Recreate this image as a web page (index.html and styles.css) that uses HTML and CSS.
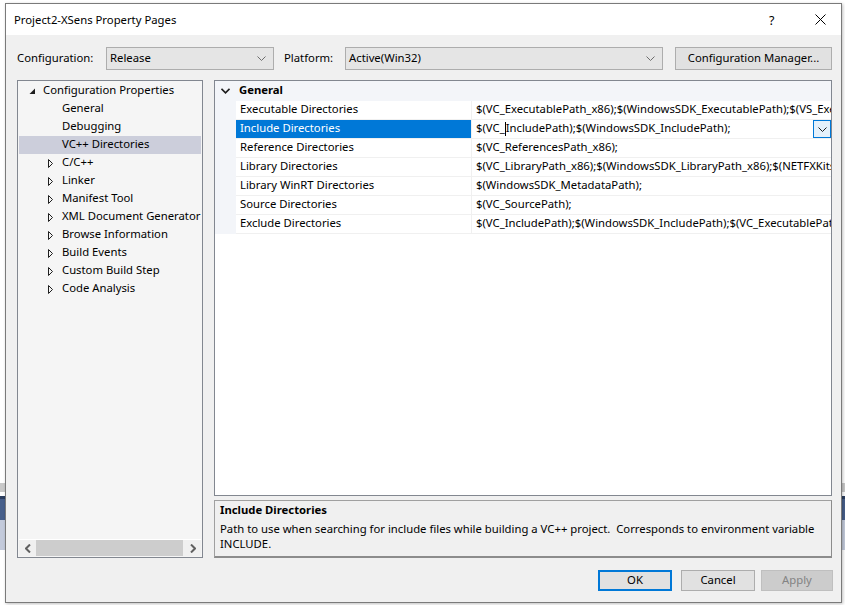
FILE: index.html
```html
<!DOCTYPE html>
<html>
<head>
<meta charset="utf-8">
<title>Project2-XSens Property Pages</title>
<link rel="stylesheet" href="styles.css">
</head>
<body>
<div class="dialog">
  <div class="titlebar">
    <span class="title">Project2-XSens Property Pages</span>
    <span class="help">?</span>
    <span class="close"><svg width="11" height="11" viewBox="0 0 11 11"><path d="M0.5 0.5 L10.5 10.5 M10.5 0.5 L0.5 10.5" stroke="#000" stroke-width="1" fill="none"/></svg></span>
  </div>
  <div class="content">
    <div class="config-row">
      <span class="lbl lbl-config">Configuration:</span>
      <div class="select sel-config"><span>Release</span><svg class="chev" width="9" height="5" viewBox="0 0 9 5"><path d="M0.5 0.5 L4.5 4.5 L8.5 0.5" stroke="#6d6d6d" fill="none"/></svg></div>
      <span class="lbl lbl-platform">Platform:</span>
      <div class="select sel-platform"><span>Active(Win32)</span><svg class="chev" width="9" height="5" viewBox="0 0 9 5"><path d="M0.5 0.5 L4.5 4.5 L8.5 0.5" stroke="#6d6d6d" fill="none"/></svg></div>
      <button class="btn btn-manager">Configuration Manager...</button>
    </div>
    <div class="main">
      <div class="tree">
        <ul class="tree-list">
          <li class="node lvl0"><span class="tog"><svg width="7" height="7" viewBox="0 0 7 7"><path d="M6 0.5 L6 6 L0.5 6 Z" fill="#1e1e1e"/></svg></span><span class="txt">Configuration Properties</span></li>
          <li class="node lvl1"><span class="tog"></span><span class="txt">General</span></li>
          <li class="node lvl1"><span class="tog"></span><span class="txt">Debugging</span></li>
          <li class="node lvl1 selected"><span class="tog"></span><span class="txt">VC++ Directories</span></li>
          <li class="node lvl1"><span class="tog"><svg width="6" height="9" viewBox="0 0 6 9"><path d="M0.5 0.5 L4.5 4.5 L0.5 8.5 Z" stroke="#1e1e1e" fill="none"/></svg></span><span class="txt">C/C++</span></li>
          <li class="node lvl1"><span class="tog"><svg width="6" height="9" viewBox="0 0 6 9"><path d="M0.5 0.5 L4.5 4.5 L0.5 8.5 Z" stroke="#1e1e1e" fill="none"/></svg></span><span class="txt">Linker</span></li>
          <li class="node lvl1"><span class="tog"><svg width="6" height="9" viewBox="0 0 6 9"><path d="M0.5 0.5 L4.5 4.5 L0.5 8.5 Z" stroke="#1e1e1e" fill="none"/></svg></span><span class="txt">Manifest Tool</span></li>
          <li class="node lvl1"><span class="tog"><svg width="6" height="9" viewBox="0 0 6 9"><path d="M0.5 0.5 L4.5 4.5 L0.5 8.5 Z" stroke="#1e1e1e" fill="none"/></svg></span><span class="txt">XML Document Generator</span></li>
          <li class="node lvl1"><span class="tog"><svg width="6" height="9" viewBox="0 0 6 9"><path d="M0.5 0.5 L4.5 4.5 L0.5 8.5 Z" stroke="#1e1e1e" fill="none"/></svg></span><span class="txt">Browse Information</span></li>
          <li class="node lvl1"><span class="tog"><svg width="6" height="9" viewBox="0 0 6 9"><path d="M0.5 0.5 L4.5 4.5 L0.5 8.5 Z" stroke="#1e1e1e" fill="none"/></svg></span><span class="txt">Build Events</span></li>
          <li class="node lvl1"><span class="tog"><svg width="6" height="9" viewBox="0 0 6 9"><path d="M0.5 0.5 L4.5 4.5 L0.5 8.5 Z" stroke="#1e1e1e" fill="none"/></svg></span><span class="txt">Custom Build Step</span></li>
          <li class="node lvl1"><span class="tog"><svg width="6" height="9" viewBox="0 0 6 9"><path d="M0.5 0.5 L4.5 4.5 L0.5 8.5 Z" stroke="#1e1e1e" fill="none"/></svg></span><span class="txt">Code Analysis</span></li>
        </ul>
        <div class="hscroll">
          <span class="sarrow"><svg width="6" height="9" viewBox="0 0 6 9"><path d="M5 0.5 L1 4.5 L5 8.5" stroke="#606060" stroke-width="2" fill="none"/></svg></span>
          <div class="track"><div class="thumb"></div></div>
          <span class="sarrow"><svg width="6" height="9" viewBox="0 0 6 9"><path d="M1 0.5 L5 4.5 L1 8.5" stroke="#606060" stroke-width="2" fill="none"/></svg></span>
        </div>
      </div>
      <div class="right">
        <div class="grid">
          <div class="cat-row">
            <span class="cat-tog"><svg width="9" height="6" viewBox="0 0 9 6"><path d="M0.5 0.8 L4.5 4.8 L8.5 0.8" stroke="#1e1e1e" stroke-width="1.6" fill="none"/></svg></span>
            <span class="cat-name">General</span>
          </div>
          <div class="prop-row"><div class="gutter"></div><div class="pname">Executable Directories</div><div class="pval">$(VC_ExecutablePath_x86);$(WindowsSDK_ExecutablePath);$(VS_ExecutablePath_x86);$(PATH);</div></div>
          <div class="prop-row active"><div class="gutter"></div><div class="pname">Include Directories</div><div class="pval"><span>$(VC_</span><span class="caret"></span><span>IncludePath);$(WindowsSDK_IncludePath);</span><span class="dd"><svg width="9" height="5" viewBox="0 0 9 5"><path d="M0.5 0.5 L4.5 4.5 L8.5 0.5" stroke="#1e1e1e" fill="none"/></svg></span></div></div>
          <div class="prop-row"><div class="gutter"></div><div class="pname">Reference Directories</div><div class="pval">$(VC_ReferencesPath_x86);</div></div>
          <div class="prop-row"><div class="gutter"></div><div class="pname">Library Directories</div><div class="pval">$(VC_LibraryPath_x86);$(WindowsSDK_LibraryPath_x86);$(NETFXKitsDir)Lib\um\x86</div></div>
          <div class="prop-row"><div class="gutter"></div><div class="pname">Library WinRT Directories</div><div class="pval">$(WindowsSDK_MetadataPath);</div></div>
          <div class="prop-row"><div class="gutter"></div><div class="pname">Source Directories</div><div class="pval">$(VC_SourcePath);</div></div>
          <div class="prop-row"><div class="gutter"></div><div class="pname">Exclude Directories</div><div class="pval">$(VC_IncludePath);$(WindowsSDK_IncludePath);$(VC_ExecutablePath_x86);$(VC_LibraryPath_x86);</div></div>
        </div>
        <div class="desc">
          <div class="desc-title">Include Directories</div>
          <div class="desc-text">Path to use when searching for include files while building a VC++ project.&nbsp; Corresponds to environment variable INCLUDE.</div>
        </div>
      </div>
    </div>
    <div class="buttons">
      <button class="btn btn-ok">OK</button>
      <button class="btn btn-cancel">Cancel</button>
      <button class="btn btn-apply" disabled>Apply</button>
    </div>
  </div>
</div>
</body>
</html>
```

FILE: styles.css
```css
* { box-sizing: border-box; }

html, body {
  margin: 0;
  padding: 0;
  width: 845px;
  height: 605px;
  overflow: hidden;
}

body {
  font-family: "Noto Sans", "Open Sans", sans-serif;
  font-size: 11.3px;
  color: #000;
  background:
    linear-gradient(to bottom,
      #ffffff 0px, #ffffff 483px,
      #c9c9c9 483px, #c9c9c9 492px,
      #ffffff 492px, #ffffff 496px,
      #2c3e60 496px, #2c3e60 499px,
      #475f8a 499px, #475f8a 520px,
      #c3cadb 520px, #c3cadb 550px,
      #ffffff 550px);
}

.dialog {
  margin: 3px 0 0 5px;
  width: 837px;
  height: 600px;
  border: 1px solid #7a7a7a;
  background: #f0f0f0;
  display: flex;
  flex-direction: column;
  box-shadow: 1px 1px 3px rgba(0,0,0,0.25);
}

.titlebar {
  height: 31px;
  background: #ffffff;
  display: flex;
  align-items: center;
  padding-left: 8px;
  flex: none;
}

.title {
  flex: 1;
  line-height: 16px;
  padding-top: 1px;
}

.help {
  width: 14px;
  font-size: 12.5px;
  margin-right: 32px;
  padding-top: 1px;
}

.close {
  width: 11px;
  height: 11px;
  margin-right: 15px;
  display: flex;
}

.content {
  flex: 1;
  display: flex;
  flex-direction: column;
  padding: 12px 8px 0 11px;
}

.config-row {
  display: flex;
  align-items: center;
  height: 23px;
  flex: none;
}

.lbl { line-height: 19px; padding-bottom: 2px; }
.lbl-config { width: 89px; }
.lbl-platform { width: 61px; margin-left: 10px; }

.select {
  height: 23px;
  background: #e5e5e5;
  border: 1px solid #adadad;
  display: flex;
  align-items: center;
  padding: 0 6px 0 3px;
}
.select span { flex: 1; line-height: 17px; padding-bottom: 2px; }
.sel-config { width: 168px; }
.sel-platform { width: 318px; }
.chev { flex: none; margin-right: 1px; }

.btn {
  font-family: inherit;
  font-size: 11.3px;
  color: #000;
  background: #e1e1e1;
  border: 1px solid #adadad;
  padding: 0 0 2px 0;
  height: 23px;
  line-height: 17px;
}

.btn-manager {
  width: 157px;
  margin-left: 12px;
}

.main {
  display: flex;
  margin-top: 10px;
  height: 478px;
  flex: none;
}

.tree {
  width: 186px;
  border: 1px solid #828790;
  background: #f5f5f5;
  padding: 1px;
  display: flex;
  flex-direction: column;
}

.tree-list {
  list-style: none;
  margin: 0;
  padding: 0;
  flex: 1;
  overflow: hidden;
}

.node {
  height: 18px;
  display: flex;
  align-items: center;
  white-space: nowrap;
}
.node .txt { line-height: 16px; padding-bottom: 2px; }
.node.lvl0 { padding-left: 10px; }
.node.lvl1 { padding-left: 29px; }
.node.selected { background: #cccedb; }

.tog {
  width: 14px;
  flex: none;
  display: flex;
  align-items: center;
}

.hscroll {
  height: 17px;
  display: flex;
  align-items: center;
  background: #f0f0f0;
  border-top: 1px solid #ffffff;
}
.sarrow {
  width: 17px;
  display: flex;
  justify-content: center;
  align-items: center;
}
.track { flex: 1; height: 16px; }
.thumb {
  height: 16px;
  width: 147px;
  background: #cdcdcd;
}

.right {
  margin-left: 11px;
  width: 618px;
  display: flex;
  flex-direction: column;
}

.grid {
  height: 416px;
  border: 1px solid #828790;
  background: #ffffff;
  overflow: hidden;
}

.cat-row {
  height: 20px;
  display: flex;
  align-items: center;
  background: #f3f5f9;
}
.cat-tog {
  width: 24px;
  padding-left: 6px;
  display: flex;
  align-items: center;
}
.cat-name { font-weight: bold; line-height: 18px; padding-bottom: 2px; }

.prop-row {
  height: 19px;
  display: flex;
}
.gutter {
  width: 21px;
  flex: none;
  background: #f3f5f9;
}
.pname {
  width: 236px;
  flex: none;
  padding-left: 4px;
  padding-bottom: 2px;
  line-height: 16px;
  border-bottom: 1px solid #f0f0f0;
  border-right: 1px solid #f0f0f0;
  white-space: nowrap;
}
.pval {
  flex: 1;
  min-width: 0;
  padding-left: 4px;
  line-height: 16px;
  border-bottom: 1px solid #f0f0f0;
  white-space: nowrap;
  overflow: hidden;
  display: flex;
  align-items: center;
  padding-bottom: 2px;
}
.prop-row.active .pval { padding-bottom: 0; }
.prop-row.active .pval > span:not(.dd):not(.caret) { padding-bottom: 2px; }
.prop-row.active .pname {
  background: #0078d7;
  color: #ffffff;
}
.prop-row.active .pval span:nth-child(3) { flex: 1; }
.caret {
  display: inline-block;
  width: 1px;
  height: 14px;
  background: #000;
  flex: none;
}
.dd {
  width: 18px;
  height: 18px;
  flex: none;
  border: 1px solid #0078d7;
  background: #e5f1fb;
  display: flex;
  align-items: center;
  justify-content: center;
}

.desc {
  margin-top: 4px;
  height: 58px;
  border: 1px solid #a0a0a0;
  border-right-color: #8c8c8c;
  border-bottom: 2px solid #8c8c8c;
  background: #f0f0f0;
  padding: 0 5px 0 5px;
}
.desc-title {
  font-weight: bold;
  line-height: 18px;
  margin-bottom: 2px;
}
.desc-text { line-height: 15px; }

.buttons {
  margin-top: 12px;
  display: flex;
  justify-content: flex-end;
  height: 21px;
}
.buttons .btn {
  height: 21px;
  width: 74px;
  line-height: 16px;
  padding-bottom: 1px;
}
.btn-ok { border: 2px solid #0078d7 !important; margin-right: 9px; }
.btn-cancel { margin-right: 6px; }
.btn-apply {
  width: 72px !important;
  background: #cccccc;
  border-color: #bfbfbf;
  color: #838383;
}
```
